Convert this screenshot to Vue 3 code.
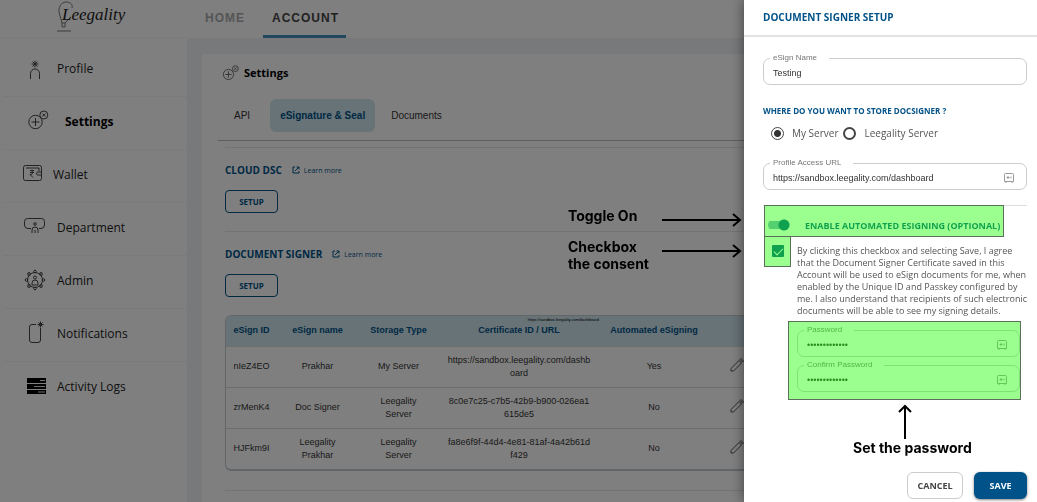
<template>
  <div class="layout">
    <aside class="sidebar">
      <div class="brand">
        <svg class="brand-nib" viewBox="0 0 18 32" width="18" height="32">
          <path d="M5 23 L2.500 14 C0.500 8 4 2 9 2 C13 2 16 4 15 8 M14 17 L8 23 M5 23 H8 V27 H5 Z" />
          <path d="M0 31 H14" />
        </svg>
        <span class="brand-name">Leegality</span>
      </div>
      <nav class="menu">
        <a v-for="item in menu" :key="item.label" href="#" class="menu-item" :class="{ active: item.active }">
          <svg v-if="item.icon === 'profile'" class="icon" viewBox="0 0 22 22" width="22" height="22">
            <path d="M7.500 22 V16.500 A4.500 4.500 0 0 1 16.500 16.500 V22" />
            <path d="M12 3.500 V10.500 M8.500 7 H15.500 M9.500 4.500 L14.500 9.500 M14.500 4.500 L9.500 9.500" />
          </svg>
          <svg v-else-if="item.icon === 'settings'" class="icon" viewBox="0 0 22 22" width="22" height="22">
            <circle cx="8.500" cy="12" r="6.700" />
            <path d="M8.500 8 V16 M4.500 12 H12.500" />
            <circle cx="16.800" cy="5" r="4" />
            <path d="M15.300 3.500 L18.300 6.500 M18.300 3.500 L15.300 6.500" />
          </svg>
          <svg v-else-if="item.icon === 'wallet'" class="icon wallet" viewBox="0 0 22 22" width="22" height="22">
            <rect x="1.500" y="2.500" width="18" height="15" rx="2" />
            <path d="M4 5 H17 V8 M19 9 H16 A1 1 0 0 0 16 12 H19" />
            <path d="M8 7.500 H12 M8 9.500 H12 M8 7.500 C12 7.500 11.500 11.500 8 11.500 L11 14.500" />
          </svg>
          <svg v-else-if="item.icon === 'department'" class="icon" viewBox="0 0 22 22" width="22" height="22">
            <path d="M8 12.500 H5 A3.500 3.500 0 0 1 1.500 9 V5.500 A3 3 0 0 1 4.500 2.500 H18.500 A3 3 0 0 1 21.500 5.500 V9 A3.500 3.500 0 0 1 18 12.500 H16" />
            <circle cx="12" cy="8" r="1.300" />
            <path d="M9 17 V14 A3 3 0 0 1 15 14 V17 M12 14 V17" />
          </svg>
          <svg v-else-if="item.icon === 'admin'" class="icon" viewBox="0 0 22 22" width="22" height="22">
            <circle cx="12" cy="11" r="7.500" />
            <circle v-for="a in 8" :key="a" cx="12" cy="2.500" r="1.300" :transform="`rotate(${a * 45} 12 11)`" />
            <circle cx="12" cy="8.500" r="1.500" />
            <path d="M9 16 V14 A3 3 0 0 1 15 14 V16 Z" />
          </svg>
          <svg v-else-if="item.icon === 'notifications'" class="icon" viewBox="0 0 22 22" width="22" height="22">
            <path d="M13 2.500 H9 A2.500 2.500 0 0 0 6.500 5 V18 A2.500 2.500 0 0 0 9 20.500 H15 A2.500 2.500 0 0 0 17.500 18 V6" />
            <path d="M17.500 -0.500 V5.500 M14.500 2.500 H20.500 M15.500 0.500 L19.500 4.500 M19.500 0.500 L15.500 4.500" />
          </svg>
          <svg v-else class="icon logs" viewBox="0 0 22 22" width="22" height="22">
            <path d="M4 2 H23 V7 H4 Z M4 8 H23 V13 H4 Z M4 14 H23 V18 H4 Z" />
            <path class="slot" d="M17 4.500 H22 M11 10.500 H22 M15 16 H22" />
          </svg>
          <span>{{ item.label }}</span>
        </a>
      </nav>
    </aside>

    <div class="page">
      <header class="topnav">
        <a href="#">HOME</a>
        <a href="#" class="current">ACCOUNT</a>
      </header>

      <main class="card">
        <h1 class="card-title">
          <svg class="icon" viewBox="0 0 22 22" width="16" height="16">
            <circle cx="7.500" cy="13" r="7" />
            <path d="M7.500 8.500 V17.500 M3 13 H12" />
            <circle cx="17" cy="5" r="4" />
            <path d="M15.500 3.500 L18.500 6.500 M18.500 3.500 L15.500 6.500" />
          </svg>
          Settings
        </h1>

        <div class="tabs">
          <button v-for="tab in tabs" :key="tab" type="button" class="tab" :class="{ selected: tab === activeTab }" @click="activeTab = tab">{{ tab }}</button>
        </div>

        <div class="sections">
          <section v-for="name in sections" :key="name" class="section">
            <div class="section-head">
              <h2>{{ name }}</h2>
              <a href="#" class="learn">
                <svg viewBox="0 0 8 8" width="8" height="8">
                  <path d="M3 1 H1 V7 H7 V5 M4.500 1 H7 V3.500 M7 1 L3 5" />
                </svg>
                Learn more
              </a>
            </div>
            <button type="button" class="setup">SETUP</button>
          </section>

          <div class="table-wrap">
            <table>
              <colgroup>
                <col class="c-id" /><col class="c-name" /><col class="c-type" /><col class="c-cert" /><col class="c-auto" /><col class="c-edit" /><col />
              </colgroup>
              <thead>
                <tr>
                  <th>eSign ID</th>
                  <th>eSign name</th>
                  <th>Storage Type</th>
                  <th class="cert-head">Certificate ID / URL<span class="tip">https://sandbox.leegality.com/dashboard</span></th>
                  <th>Automated eSigning</th>
                  <th></th>
                  <th></th>
                </tr>
              </thead>
              <tbody>
                <tr v-for="row in rows" :key="row.id">
                  <td>{{ row.id }}</td>
                  <td>{{ row.name }}</td>
                  <td class="type">{{ row.type }}</td>
                  <td class="cert">{{ row.cert }}</td>
                  <td>{{ row.auto }}</td>
                  <td>
                    <button type="button" class="edit" aria-label="Edit">
                      <svg viewBox="0 0 14 14" width="14" height="14">
                        <path d="M1 13 V10.500 L9 2.500 L11.500 5 L3.500 13 Z M10 1.500 L11 0.500 L13.500 3 L12.500 4 Z" />
                      </svg>
                    </button>
                  </td>
                  <td></td>
                </tr>
              </tbody>
            </table>
          </div>
          <hr />
        </div>
      </main>
    </div>

    <div class="backdrop"></div>

    <div class="callouts">
      <div class="callout">
        <span>Toggle On</span>
        <svg viewBox="0 0 80 14" width="80" height="14"><path d="M0 7 H78 M71 1 L78 7 L71 13" /></svg>
      </div>
      <div class="callout">
        <span>Checkbox<br />the consent</span>
        <svg viewBox="0 0 80 14" width="80" height="14"><path d="M0 7 H78 M71 1 L78 7 L71 13" /></svg>
      </div>
    </div>

    <form class="drawer" @submit.prevent>
      <h2 class="drawer-title">DOCUMENT SIGNER SETUP</h2>
      <div class="drawer-body">
        <fieldset class="field">
          <legend><label for="esign-name">eSign Name</label></legend>
          <input id="esign-name" v-model="esignName" type="text" />
        </fieldset>

        <h3>WHERE DO YOU WANT TO STORE DOCSIGNER ?</h3>
        <div class="radios">
          <label><input v-model="server" type="radio" name="server" value="my" />My Server</label>
          <label><input v-model="server" type="radio" name="server" value="leegality" />Leegality Server</label>
        </div>

        <fieldset class="field">
          <legend><label for="access-url">Profile Access URL</label></legend>
          <input id="access-url" v-model="accessUrl" type="text" />
          <svg class="vault" viewBox="0 0 10 11" width="10" height="11"><path :d="vaultIcon" /></svg>
        </fieldset>

        <div class="automated">
          <label class="toggle-row marked">
            <input v-model="automated" type="checkbox" class="toggle" />
            ENABLE AUTOMATED ESIGNING (OPTIONAL)
          </label>
          <div class="consent">
            <span class="consent-box marked"><input id="consent" v-model="consent" type="checkbox" /></span>
            <label for="consent">By clicking this checkbox and selecting Save, I agree that the Document Signer Certificate saved in this Account will be used to eSign documents for me, when enabled by the Unique ID and Passkey configured by me. I also understand that recipients of such electronic documents will be able to see my signing details.</label>
          </div>
          <div class="passwords marked">
            <fieldset class="field">
              <legend><label for="password">Password</label></legend>
              <input id="password" v-model="password" type="password" />
              <svg class="vault" viewBox="0 0 10 11" width="10" height="11"><path :d="vaultIcon" /></svg>
            </fieldset>
            <fieldset class="field">
              <legend><label for="confirm">Confirm Password</label></legend>
              <input id="confirm" v-model="confirm" type="password" />
              <svg class="vault" viewBox="0 0 10 11" width="10" height="11"><path :d="vaultIcon" /></svg>
            </fieldset>
          </div>
        </div>

        <div class="note">
          <svg viewBox="0 0 14 34" width="14" height="34"><path d="M7 34 V1 M1 7 L7 1 L13 7" /></svg>
          <span>Set the password</span>
        </div>

        <div class="actions">
          <button type="button" class="cancel">CANCEL</button>
          <button type="submit" class="save">SAVE</button>
        </div>
      </div>
    </form>
  </div>
</template>

<script setup>
import { ref } from 'vue';

const menu = [
  { label: 'Profile', icon: 'profile' },
  { label: 'Settings', icon: 'settings', active: true },
  { label: 'Wallet', icon: 'wallet' },
  { label: 'Department', icon: 'department' },
  { label: 'Admin', icon: 'admin' },
  { label: 'Notifications', icon: 'notifications' },
  { label: 'Activity Logs', icon: 'logs' }
];

const tabs = ['API', 'eSignature & Seal', 'Documents'];
const activeTab = ref('eSignature & Seal');

const sections = ['CLOUD DSC', 'DOCUMENT SIGNER'];

const rows = [
  { id: 'nIeZ4EO', name: 'Prakhar', type: 'My Server', cert: 'https://sandbox.leegality.com/dashboard', auto: 'Yes' },
  { id: 'zrMenK4', name: 'Doc Signer', type: 'Leegality Server', cert: '8c0e7c25-c7b5-42b9-b900-026ea1615de5', auto: 'No' },
  { id: 'HJFkm9I', name: 'Leegality Prakhar', type: 'Leegality Server', cert: 'fa8e6f9f-44d4-4e81-81af-4a42b61df429', auto: 'No' }
];

const esignName = ref('Testing');
const server = ref('my');
const accessUrl = ref('https://sandbox.leegality.com/dashboard');
const automated = ref(true);
const consent = ref(true);
const password = ref('esign-passkey');
const confirm = ref('esign-passkey');

const vaultIcon = 'M0.500 1.500 A1 1 0 0 1 1.500 0.500 H8.500 A1 1 0 0 1 9.500 1.500 V8.500 H0.500 Z M2 9 V10 M8 9 V10 M2.500 4.500 H5.500 M4 3 V6 M7 3.500 V5.500';
</script>

<style>
body {
  background: #808080;
}
</style>

<style scoped>
* {
  box-sizing: border-box;
}

.layout {
  --blue: #005288;
  --ui: "Open Sans", "Noto Sans", sans-serif;
  --arial: "Liberation Sans", Arial, sans-serif;
  display: flex;
  height: 100vh;
  overflow: hidden;
  background: #f0f2f6;
  font-family: var(--ui);
}

a {
  text-decoration: none;
}

button {
  font-family: inherit;
  cursor: pointer;
}

h1,
h2,
h3 {
  margin: 0;
}

svg {
  fill: none;
  stroke: currentColor;
  flex: none;
  overflow: visible;
}

/* sidebar */
.sidebar {
  flex: none;
  width: 187px;
  background: #fff;
}

.brand {
  display: flex;
  height: 38px;
  padding-left: 57px;
  border-bottom: 1px solid #f4f4f4;
  color: #222;
}

.brand-nib {
  color: #777;
}

.brand-name {
  margin-left: -13px;
  font: italic 17px/30px "Liberation Serif", cursive;
}

.menu {
  padding: 6px 0 0 4px;
}

.menu-item {
  display: flex;
  align-items: center;
  gap: 12px;
  height: 53px;
  padding: 0 0 4px 19px;
  border-bottom: 1px solid #f4f4f4;
  color: #222;
  font-size: 12px;
}

.menu-item:last-child {
  border-bottom: none;
}

.menu-item.active {
  gap: 16px;
  padding-left: 23px;
  color: #000;
  font-weight: 700;
}

.icon {
  color: #444;
}

.icon.wallet {
  margin: 0 -3px 0 -1px;
}

.logs path {
  fill: #000;
  stroke: none;
}

.logs .slot {
  stroke: #ddd;
}

/* page */
.page {
  flex: 1;
  display: flex;
  flex-direction: column;
  min-width: 0;
}

.topnav {
  flex: none;
  display: flex;
  gap: 9px;
  height: 38px;
  padding-left: 9px;
  background: #fff;
  font: bold 12px/36px var(--arial);
  letter-spacing: 1px;
}

.topnav a {
  padding: 0 9px;
  color: #aaa;
}

.topnav .current {
  padding-right: 7px;
  border-bottom: 3px solid #4590bd;
  color: #444;
}

.card {
  flex: 1;
  min-height: 0;
  overflow: hidden;
  margin: 16px 15px 0;
  padding: 10px 16px;
  background: #fff;
}

.card-title {
  display: flex;
  align-items: center;
  gap: 5px;
  padding-left: 5px;
  font-size: 11px;
  line-height: 18px;
}

.tabs {
  display: flex;
  gap: 6px;
  padding: 17px 0 8px 6px;
  border-bottom: 1px solid #bbb;
}

.tab {
  height: 33px;
  padding: 0 10px;
  border: none;
  border-radius: 6px;
  background: none;
  color: #333;
  font: 10px var(--arial);
}

.tab.selected {
  margin-left: 4px;
  background: #cfe6ee;
  color: var(--blue);
  font-weight: 700;
}

.sections {
  margin-top: 6px;
  padding-left: 7px;
}

.section {
  height: 84px;
  padding-top: 14px;
  border-top: 1px solid #e6e6e6;
}

.section-head {
  display: flex;
  gap: 10px;
  height: 16px;
  align-items: center;
}

h2 {
  color: var(--blue);
  font-size: 10px;
  line-height: 16px;
}

.learn {
  display: flex;
  align-items: center;
  gap: 4px;
  color: var(--blue);
  font-size: 7px;
}

.setup {
  display: block;
  width: 53px;
  height: 23px;
  margin-top: 12px;
  padding: 0;
  border: 1px solid var(--blue);
  border-radius: 4px;
  background: #fff;
  color: var(--blue);
  font-size: 8px;
  font-weight: 700;
}

.table-wrap {
  overflow: hidden;
  border: 1px solid #c4ccd2;
  border-bottom-width: 2px;
  border-radius: 6px;
}

table {
  width: 100%;
  table-layout: fixed;
  border-collapse: collapse;
  font: 9px/13px var(--arial);
  text-align: center;
  color: #333;
}

.c-id {
  width: 51px;
}

.c-name,
.c-type {
  width: 81px;
}

.c-cert {
  width: 160px;
}

.c-auto {
  width: 110px;
}

.c-edit {
  width: 56px;
}

th {
  height: 30px;
  padding: 0;
  background: #cfe6ee;
  color: var(--blue);
  white-space: nowrap;
}

td {
  height: 41px;
  padding: 0 8px;
  border-top: 1px solid #ddd;
}

td:first-child {
  padding: 0;
}

td.type {
  padding: 0 18px;
}

tr:first-child td.type {
  padding: 0;
}

.cert {
  word-break: break-all;
}

.cert-head {
  position: relative;
}

.tip {
  position: absolute;
  top: 1px;
  right: 0;
  color: #000;
  font: 4px/6px var(--arial);
}

.edit {
  padding: 0;
  border: none;
  background: none;
  color: #555;
}

hr {
  margin: 19px 0 0;
  border: none;
  border-top: 1px solid #e6e6e6;
}

.backdrop {
  position: fixed;
  inset: 0;
  background: rgba(0, 0, 0, 0.5);
}

/* callouts beside the drawer */
.callouts {
  position: fixed;
  top: 207px;
  right: 295px;
  z-index: 3;
  display: flex;
  flex-direction: column;
  gap: 11px;
  color: #000;
  font: 700 14px/17px Inter, sans-serif;
}

.callout {
  display: flex;
  justify-content: space-between;
  gap: 13px;
}

.callout svg {
  margin-top: 6px;
  stroke-width: 2;
}

/* drawer */
.drawer {
  position: fixed;
  top: 0;
  right: 0;
  bottom: 0;
  z-index: 2;
  display: flex;
  flex-direction: column;
  width: 293px;
  background: #fff;
  box-shadow: 0 0 12px rgba(0, 0, 0, 0.5);
}

.drawer-title {
  height: 37px;
  padding: 9px 19px;
  border-bottom: 2px solid #e2e2e2;
}

.drawer-body {
  flex: 1;
  display: flex;
  flex-direction: column;
  padding: 16px 10px 3px 19px;
}

.field {
  display: flex;
  align-items: center;
  min-width: 0;
  height: 32px;
  margin: 0;
  padding: 2px 12px 0 6px;
  border: 1px solid #ccc;
  border-radius: 7px;
}

.field legend {
  height: 10px;
  padding: 0 12px 0 3px;
  color: #777;
  font: 8px/10px var(--arial);
}

.field input {
  flex: 1;
  min-width: 0;
  height: 16px;
  padding: 0 3px;
  border: none;
  outline: none;
  background: none;
  color: #333;
  font: 9px/16px var(--arial);
}

.vault {
  color: #999;
}

h3 {
  margin-top: 20px;
  color: var(--blue);
  font-size: 8px;
  line-height: 12px;
}

.radios {
  display: flex;
  gap: 5px;
  height: 16px;
  margin: 8px 0 17px;
  padding-left: 8px;
  color: #555;
  font-size: 10px;
}

.radios label {
  display: flex;
  align-items: center;
  gap: 8px;
}

.radios input {
  appearance: none;
  width: 13px;
  height: 13px;
  margin: 0;
  border: 2px solid #444;
  border-radius: 50%;
}

.radios input:checked {
  border-width: 1px;
  background: radial-gradient(circle, #333 3px, #fff 4px);
}

.automated {
  margin-top: 15px;
  border-top: 1px solid #ddd;
}

.marked {
  position: relative;
}

.marked::after {
  content: '';
  position: absolute;
  inset: 0;
  border: 1px solid #5a705a;
  background: rgba(34, 255, 11, 0.46);
  pointer-events: none;
}

.toggle-row {
  display: flex;
  align-items: center;
  gap: 14px;
  width: 240px;
  height: 32px;
  margin: -1px 0 0 1px;
  padding: 8px 0 0 4px;
  color: var(--blue);
  font-size: 9px;
  font-weight: 700;
  white-space: nowrap;
}

.toggle {
  appearance: none;
  flex: none;
  width: 23px;
  height: 12px;
  margin: 0;
  background:
    radial-gradient(circle at 16px 6px, #005288 5px, transparent 6px),
    linear-gradient(#80a9c4, #80a9c4) 0 2px / 20px 8px no-repeat;
  border-radius: 6px;
}

.consent {
  display: flex;
  gap: 6px;
  margin: -1px -2px 0 1px;
  color: #555;
  font-size: 9px;
  line-height: 12px;
}

.consent label {
  padding-top: 9px;
}

.consent-box {
  flex: none;
  width: 27px;
  height: 31px;
  padding: 9px 8px;
}

.consent-box input {
  appearance: none;
  display: block;
  width: 12px;
  height: 12px;
  margin: 0;
  border-radius: 1px;
  background: #005288;
}

.consent-box input:checked::before {
  content: '';
  display: block;
  position: relative;
  top: 3px;
  width: 8px;
  height: 4px;
  margin: 0 2px;
  border: solid #fff;
  border-width: 0 0 1px 1px;
  transform: rotate(-45deg);
}

.passwords {
  display: flex;
  flex-direction: column;
  gap: 3px;
  margin: 4px 6px 0 25px;
  padding: 4px 1px 8px 9px;
}

.note {
  display: flex;
  flex-direction: column;
  width: 119px;
  margin: 5px 0 0 90px;
  color: #000;
  font: 700 14px/17px Inter, sans-serif;
  white-space: nowrap;
}

.note svg {
  margin-left: 45px;
  stroke-width: 2;
}

.actions {
  display: flex;
  justify-content: flex-end;
  gap: 11px;
  margin-top: auto;
}

.actions button {
  height: 27px;
  padding: 0;
  border-radius: 6px;
  font-size: 9px;
  font-weight: 700;
}

.cancel {
  width: 56px;
  border: 1px solid #ccc;
  background: #fff;
  color: #444;
}

.save {
  width: 53px;
  border: none;
  background: #005288;
  color: #fff;
  box-shadow: 0 1px 3px rgba(0, 0, 0, 0.5);
}
</style>
